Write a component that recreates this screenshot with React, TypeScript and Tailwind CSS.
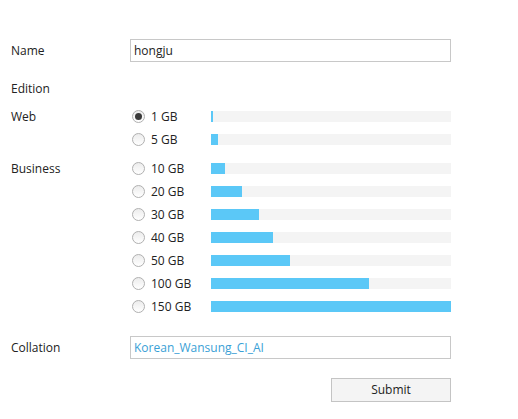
import { useState } from "react";

type Plan = {
  size: number;
  bar: number;
};

const webPlans: Plan[] = [
  { size: 1, bar: 2 },
  { size: 5, bar: 7 },
];
const businessPlans: Plan[] = [
  { size: 10, bar: 14 },
  { size: 20, bar: 31 },
  { size: 30, bar: 48 },
  { size: 40, bar: 62 },
  { size: 50, bar: 79 },
  { size: 100, bar: 158 },
  { size: 150, bar: 240 },
];

function PlanRow({
  plan,
  checked,
  onSelect,
}: {
  plan: Plan;
  checked: boolean;
  onSelect: () => void;
}) {
  return (
    <div className="flex h-[23px] items-center">
      <button
        onClick={onSelect}
        className="flex w-[81px] items-center gap-[6px] pl-[2px] text-left"
      >
        <span className="flex h-[13px] w-[13px] items-center justify-center rounded-full border border-[#b0b0b0] bg-gradient-to-b from-[#ececec] to-white">
          {checked && <span className="h-[7px] w-[7px] rounded-full bg-[#3a3a3a]" />}
        </span>
        <span>{plan.size} GB</span>
      </button>
      <div className="h-[11px] w-[240px] bg-[#f4f4f4]">
        <div className="h-full bg-[#5bc8f7]" style={{ width: `${plan.bar}px` }} />
      </div>
    </div>
  );
}

export default function App() {
  const [name, setName] = useState("hongju");
  const [collation, setCollation] = useState("Korean_Wansung_CI_AI");
  const [selected, setSelected] = useState(1);

  return (
    <div className="min-h-[419px] bg-white pl-[11px] pt-[39px] text-[12px] text-[#222] [font-family:'Segoe_UI','Open_Sans',sans-serif]">
      <div className="flex h-[23px] items-center">
        <span className="w-[119px]">Name</span>
        <input
          value={name}
          onChange={(event) => setName(event.target.value)}
          className="h-[23px] w-[321px] border border-[#c8c8c8] px-[3px] outline-none"
        />
      </div>

      <div className="mt-[15px] flex h-[23px] items-center">Edition</div>

      <div className="mt-[5px] flex">
        <span className="flex h-[23px] w-[119px] items-center">Web</span>
        <div>
          {webPlans.map((plan) => (
            <PlanRow
              key={plan.size}
              plan={plan}
              checked={selected === plan.size}
              onSelect={() => setSelected(plan.size)}
            />
          ))}
        </div>
      </div>

      <div className="mt-[6px] flex">
        <span className="flex h-[23px] w-[119px] items-center">Business</span>
        <div>
          {businessPlans.map((plan) => (
            <PlanRow
              key={plan.size}
              plan={plan}
              checked={selected === plan.size}
              onSelect={() => setSelected(plan.size)}
            />
          ))}
        </div>
      </div>

      <div className="mt-[18px] flex h-[23px] items-center">
        <span className="w-[119px]">Collation</span>
        <input
          value={collation}
          onChange={(event) => setCollation(event.target.value)}
          className="h-[23px] w-[321px] border border-[#c8c8c8] px-[3px] text-[#3a9fd6] outline-none"
        />
      </div>

      <div className="mt-[19px] flex">
        <button className="ml-[320px] h-[24px] w-[120px] border border-[#c4c4c4] bg-[#f4f4f4] text-[#222]">
          Submit
        </button>
      </div>
    </div>
  );
}
